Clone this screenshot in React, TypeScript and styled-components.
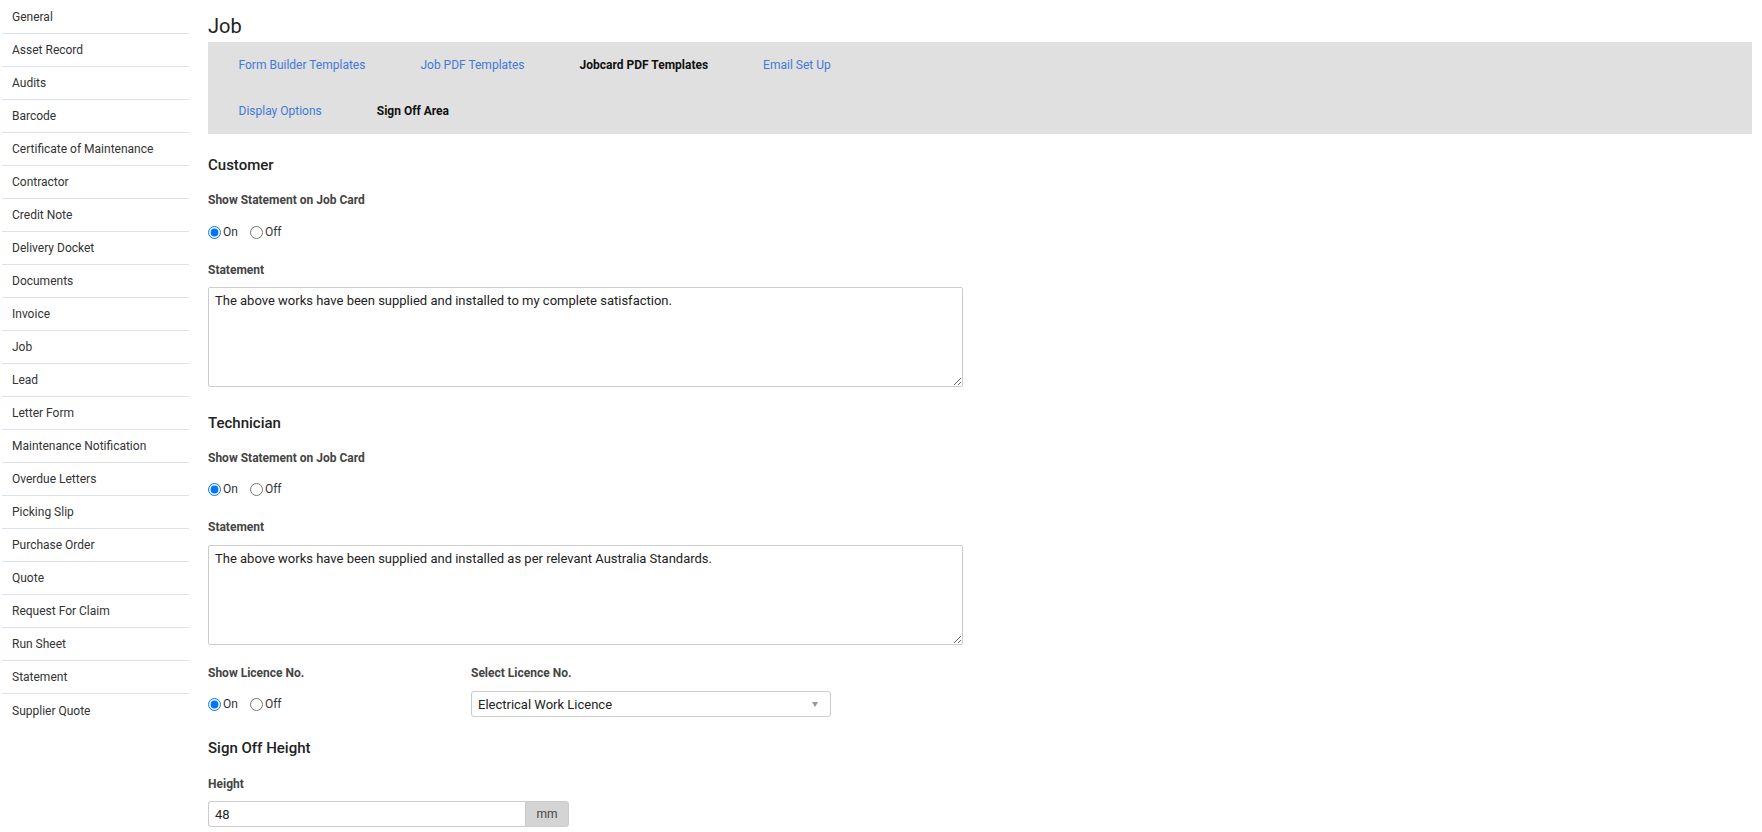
import React, {useState} from 'react';
import styled, {createGlobalStyle} from 'styled-components';

const GlobalStyle = createGlobalStyle`
  html, body {
    margin: 0;
    padding: 0;
    background: #ffffff;
    font-family: Roboto, "Liberation Sans", Arial, sans-serif;
    color: #333333;
  }
  * { box-sizing: border-box; }
`;

const Page = styled.div`
  display: flex;
  align-items: flex-start;
  width: 1762px;
  min-height: 832px;
`;

const Sidebar = styled.ul`
  list-style: none;
  margin: 0;
  padding: 1px 0 0 2px;
  width: 189px;
  flex-shrink: 0;
`;

const SideItem = styled.li<{$last?: boolean}>`
  height: 33px;
  display: flex;
  align-items: center;
  padding-left: 10px;
  font-size: 12px;
  color: #333333;
  border-bottom: ${p => (p.$last ? 'none' : '1px solid #dde2e8')};
  cursor: pointer;
`;

const Main = styled.main`
  flex: 1;
  margin-left: 19px;
  padding-right: 10px;
`;

const Title = styled.h1`
  margin: 14px 0 4px;
  font-size: 20px;
  line-height: 24px;
  font-weight: 400;
  color: #222222;
`;

const TabPanel = styled.div`
  background: #e0e0e0;
  padding: 0 3px;
`;

const TabRow = styled.div`
  display: flex;
`;

const Tab = styled.a<{$active?: boolean}>`
  display: block;
  padding: 0 27.5px;
  line-height: 46px;
  font-size: 12px;
  font-weight: ${p => (p.$active ? 700 : 400)};
  color: ${p => (p.$active ? '#111111' : '#3f7ad6')};
  text-decoration: none;
  cursor: pointer;
`;

const SectionTitle = styled.h3<{$top: number}>`
  margin: ${p => p.$top}px 0 0;
  font-size: 15px;
  line-height: 20px;
  font-weight: 500;
  color: #222222;
`;

const FieldLabel = styled.label<{$top: number}>`
  display: block;
  margin-top: ${p => p.$top}px;
  font-size: 12px;
  line-height: 16px;
  font-weight: 700;
  color: #444444;
`;

const RadioRow = styled.div<{$top: number}>`
  display: flex;
  align-items: center;
  gap: 12px;
  margin-top: ${p => p.$top}px;
  height: 16px;
`;

const RadioOption = styled.label`
  display: flex;
  align-items: center;
  gap: 2px;
  font-size: 12px;
  color: #333333;
  cursor: pointer;

  input {
    margin: 0;
    width: 13px;
    height: 13px;
  }
`;

const TextArea = styled.textarea<{$top: number}>`
  display: block;
  margin-top: ${p => p.$top}px;
  width: 755px;
  height: 100px;
  padding: 5px 6px;
  border: 1px solid #cccccc;
  border-radius: 2px;
  font-family: Roboto, "Liberation Sans", Arial, sans-serif;
  font-size: 13px;
  line-height: 15px;
  color: #222222;
  resize: vertical;
  outline: none;
`;

const TwoCol = styled.div`
  display: grid;
  grid-template-columns: 263px 360px;
  margin-top: 20px;
`;

const Col = styled.div``;

const SelectBox = styled.div`
  position: relative;
  margin-top: 10px;
  height: 26px;
  border: 1px solid #cccccc;
  border-radius: 3px;
  display: flex;
  align-items: center;
  padding: 0 6px;
  font-size: 13px;
  color: #222222;
  background: #ffffff;
`;

const Caret = styled.span`
  position: absolute;
  right: 12px;
  top: 10px;
  width: 0;
  height: 0;
  border-left: 3.5px solid transparent;
  border-right: 3.5px solid transparent;
  border-top: 5px solid #999999;
`;

const InputGroup = styled.div`
  display: flex;
  margin-top: 9px;
  width: 361px;
  height: 26px;
`;

const NumberInput = styled.input`
  flex: 1;
  min-width: 0;
  height: 26px;
  border: 1px solid #cccccc;
  border-right: none;
  border-radius: 3px 0 0 3px;
  padding: 0 6px;
  font-family: Roboto, "Liberation Sans", Arial, sans-serif;
  font-size: 13px;
  color: #222222;
  outline: none;
`;

const Addon = styled.span`
  width: 44px;
  display: flex;
  align-items: center;
  justify-content: center;
  background: #d4d4d4;
  border: 1px solid #cccccc;
  border-radius: 0 3px 3px 0;
  font-size: 12px;
  color: #444444;
`;

const menu = [
  'General', 'Asset Record', 'Audits', 'Barcode', 'Certificate of Maintenance', 'Contractor',
  'Credit Note', 'Delivery Docket', 'Documents', 'Invoice', 'Job', 'Lead', 'Letter Form',
  'Maintenance Notification', 'Overdue Letters', 'Picking Slip', 'Purchase Order', 'Quote',
  'Request For Claim', 'Run Sheet', 'Statement', 'Supplier Quote',
];

const OnOff = ({name, top}: {name: string; top: number}) => {
  const [value, setValue] = useState('on');
  return <RadioRow $top={top}>
    <RadioOption>
      <input type="radio" name={name} checked={value === 'on'} onChange={() => setValue('on')}/>
      On
    </RadioOption>
    <RadioOption>
      <input type="radio" name={name} checked={value === 'off'} onChange={() => setValue('off')}/>
      Off
    </RadioOption>
  </RadioRow>;
};

export default () => {
  const [customerText, setCustomerText] = useState('The above works have been supplied and installed to my complete satisfaction.');
  const [techText, setTechText] = useState('The above works have been supplied and installed as per relevant Australia Standards.');
  const [height, setHeight] = useState('48');

  return <Page>
    <GlobalStyle/>
    <Sidebar>
      {menu.map((m, i) => <SideItem key={m} $last={i === menu.length - 1}>{m}</SideItem>)}
    </Sidebar>
    <Main>
      <Title>Job</Title>
      <TabPanel>
        <TabRow>
          <Tab>Form Builder Templates</Tab>
          <Tab>Job PDF Templates</Tab>
          <Tab $active>Jobcard PDF Templates</Tab>
          <Tab>Email Set Up</Tab>
        </TabRow>
        <TabRow>
          <Tab>Display Options</Tab>
          <Tab $active>Sign Off Area</Tab>
        </TabRow>
      </TabPanel>

      <SectionTitle $top={21}>Customer</SectionTitle>
      <FieldLabel $top={17}>Show Statement on Job Card</FieldLabel>
      <OnOff name="customer" top={16}/>
      <FieldLabel $top={22}>Statement</FieldLabel>
      <TextArea $top={9} value={customerText} onChange={e => setCustomerText(e.target.value)}/>

      <SectionTitle $top={26}>Technician</SectionTitle>
      <FieldLabel $top={17}>Show Statement on Job Card</FieldLabel>
      <OnOff name="technician" top={15}/>
      <FieldLabel $top={22}>Statement</FieldLabel>
      <TextArea $top={10} value={techText} onChange={e => setTechText(e.target.value)}/>

      <TwoCol>
        <Col>
          <FieldLabel $top={0}>Show Licence No.</FieldLabel>
          <OnOff name="licence" top={15}/>
        </Col>
        <Col>
          <FieldLabel $top={0}>Select Licence No.</FieldLabel>
          <SelectBox>
            Electrical Work Licence
            <Caret/>
          </SelectBox>
        </Col>
      </TwoCol>

      <SectionTitle $top={21}>Sign Off Height</SectionTitle>
      <FieldLabel $top={18}>Height</FieldLabel>
      <InputGroup>
        <NumberInput value={height} onChange={e => setHeight(e.target.value)}/>
        <Addon>mm</Addon>
      </InputGroup>
    </Main>
  </Page>;
};
